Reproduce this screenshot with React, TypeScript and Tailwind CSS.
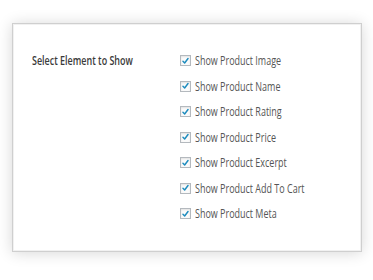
const items = [
  "Show Product Image",
  "Show Product Name",
  "Show Product Rating",
  "Show Product Price",
  "Show Product Excerpt",
  "Show Product Add To Cart",
  "Show Product Meta",
];

function Check() {
  return (
    <span className="flex h-[11px] w-[11px] shrink-0 items-center justify-center border border-[#b4b9be] bg-[#fbfbfb] shadow-[inset_0_1px_2px_rgba(0,0,0,0.1)]">
      <svg viewBox="0 0 16 16" className="h-[10px] w-[10px]">
        <path d="M3.5 8.5 L6.5 11.5 L12.5 3.5" fill="none" stroke="#1e8cbe" strokeWidth="2.6" strokeLinecap="round" strokeLinejoin="round" />
      </svg>
    </span>
  );
}

export default function App() {
  return (
    <div className="h-[280px] w-[373px] bg-white pl-[12px] pt-[23px]" style={{ fontFamily: '"Open Sans", "Noto Sans", sans-serif' }}>
      <div className="flex h-[229px] w-[350px] border border-[#cfcfcf] bg-white pt-[24px] shadow-[0_1px_14px_rgba(0,0,0,0.16),inset_0_0_0_1px_#f1f1f1]">
        <div className="w-[167px] shrink-0 pl-[19px]">
          <div className="flex h-[25.5px] items-center">
            <span className="origin-left scale-x-[0.69] whitespace-nowrap text-[13px] font-semibold text-[#3a3a3a]">Select Element to Show</span>
          </div>
        </div>
        <div className="flex flex-col">
          {items.map((t) => (
            <div key={t} className="flex h-[25.5px] items-center gap-[4px]">
              <Check />
              <span className="origin-left scale-x-[0.69] whitespace-nowrap text-[13px] text-[#555]">{t}</span>
            </div>
          ))}
        </div>
      </div>
    </div>
  );
}
